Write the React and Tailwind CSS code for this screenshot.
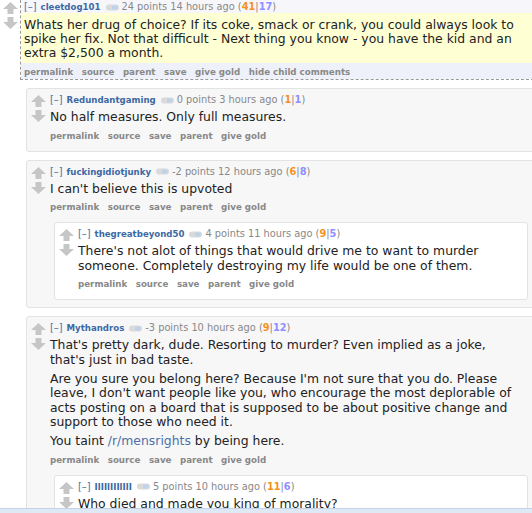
import React from 'react';

function Arrows({ className = '' }) {
  return (
    <div className={'flex flex-col ' + className}>
      <svg width="15" height="12" viewBox="0 0 15 12">
        <path d="M7.5 0L15 7H10.5V12H4.5V7H0Z" fill="#c6c6c6" />
      </svg>
      <svg width="15" height="12" viewBox="0 0 15 12" className="mt-[3px]">
        <path d="M4.5 0H10.5V5H15L7.5 12L0 5H4.5Z" fill="#c6c6c6" />
      </svg>
    </div>
  );
}

function Pill() {
  return (
    <svg width="13" height="7" viewBox="0 0 13 7" className="ml-[5px] shrink-0">
      <rect x="0" y="0.5" width="13" height="6" rx="3" fill="#dadada" />
      <rect x="6" y="1.5" width="5.5" height="4" rx="1" fill="#bcd3ea" />
    </svg>
  );
}

function Tagline({ author, points, time, up, down }) {
  return (
    <div className="flex items-center whitespace-nowrap text-[9.8px] leading-[12px] text-[#888]">
      <span className="text-[#4b71a8]">[–]</span>
      <span className="ml-[4px] text-[8.6px] font-bold text-[#3d69a3]">{author}</span>
      <Pill />
      <span className="ml-[3px]">
        {points} points {time} ago (<b className="text-[#f7911d]">{up}</b>|<b className="text-[#8f8fff]">{down}</b>)
      </span>
    </div>
  );
}

function Buttons({ items }) {
  return (
    <div className="flex gap-[8.5px] whitespace-nowrap text-[8.7px] font-bold leading-[12px] text-[#888]">
      {items.map((b) => (
        <span key={b}>{b}</span>
      ))}
    </div>
  );
}

const childButtons = ['permalink', 'source', 'save', 'parent', 'give gold'];

function Comment({ c, nested = false, children }) {
  return (
    <div
      className={
        'flex rounded-[3px] border ' +
        (nested ? 'ml-[4px] mr-[15px] mt-[9px] border-[#e3e3e3] bg-white' : 'mb-[8px] border-[#e3e3e3] bg-[#f7f7f8]')
      }
    >
      <Arrows className="w-[23px] shrink-0 pl-[4px] pt-[6px]" />
      <div className={'min-w-0 flex-1 pt-[5px] ' + (children ? 'pb-[7px]' : 'pb-[9px]')}>
        <Tagline {...c} />
        <div
          className={
            'mt-[4px] space-y-[4.5px] text-[12.4px] leading-[14.5px] text-[#222] ' + (nested ? 'pr-[3px]' : 'pr-[19px]')
          }
        >
          {c.body.map((p, i) => (
            <p key={i}>{p}</p>
          ))}
        </div>
        <div className="mt-[5px]">
          <Buttons items={childButtons} />
        </div>
        {children}
      </div>
    </div>
  );
}

export default function App() {
  return (
    <div className="relative h-[513px] w-[532px] overflow-hidden bg-white font-['DejaVu_Sans',sans-serif]">
      {/* target comment */}
      <div className="flex">
        <Arrows className="w-[20px] shrink-0 pl-[3px] pt-[2px]" />
        <div className="mr-[-12px] min-w-0 flex-1 border border-t-0 border-dashed border-[#999]">
          <div className="h-[13px] bg-[#f7f7fb] pl-[3px] pt-[1px]">
            <Tagline author="cleetdog101" points="24" time="14 hours" up="41" down="17" />
          </div>
          <div className="bg-[#ffffd4] pb-[3px] pl-[3px] pr-[15px] pt-[5px] text-[12.4px] leading-[14px] text-[#222]">
            Whats her drug of choice? If its coke, smack or crank, you could always look to spike her fix. Not that difficult - Next thing you know - you have the kid and an extra $2,500 a month.
          </div>
          <div className="h-[16px] bg-[#eef1f9] pl-[3px] pt-[3px]">
            <Buttons items={['permalink', 'source', 'parent', 'save', 'give gold', 'hide child comments']} />
          </div>
        </div>
      </div>

      {/* replies */}
      <div className="mr-[-12px] mt-[8px] pl-[26px]">
        <Comment
          c={{ author: 'Redundantgaming', points: '0', time: '3 hours', up: '1', down: '1', body: ['No half measures. Only full measures.'] }}
        />
        <Comment
          c={{ author: 'fuckingidiotjunky', points: '-2', time: '12 hours', up: '6', down: '8', body: ["I can't believe this is upvoted"] }}
        >
          <Comment
            nested
            c={{
              author: 'thegreatbeyond50',
              points: '4',
              time: '11 hours',
              up: '9',
              down: '5',
              body: ["There's not alot of things that would drive me to want to murder someone. Completely destroying my life would be one of them."],
            }}
          />
        </Comment>
        <Comment
          c={{
            author: 'Mythandros',
            points: '-3',
            time: '10 hours',
            up: '9',
            down: '12',
            body: [
              "That's pretty dark, dude. Resorting to murder? Even implied as a joke, that's just in bad taste.",
              "Are you sure you belong here? Because I'm not sure that you do. Please leave, I don't want people like you, who encourage the most deplorable of acts posting on a board that is supposed to be about positive change and support to those who need it.",
              <>
                You taint <span className="text-[#4b71a8]">/r/mensrights</span> by being here.
              </>,
            ],
          }}
        >
          <Comment
            nested
            c={{ author: 'IlIIlIIIlIlI', points: '5', time: '10 hours', up: '11', down: '6', body: ['Who died and made you king of morality?'] }}
          />
        </Comment>
      </div>

      {/* bottom bar */}
      <div className="absolute bottom-0 left-0 right-0 h-[5px] border-t border-[#c3d3e8] bg-[#dfe9f6]" />
    </div>
  );
}
